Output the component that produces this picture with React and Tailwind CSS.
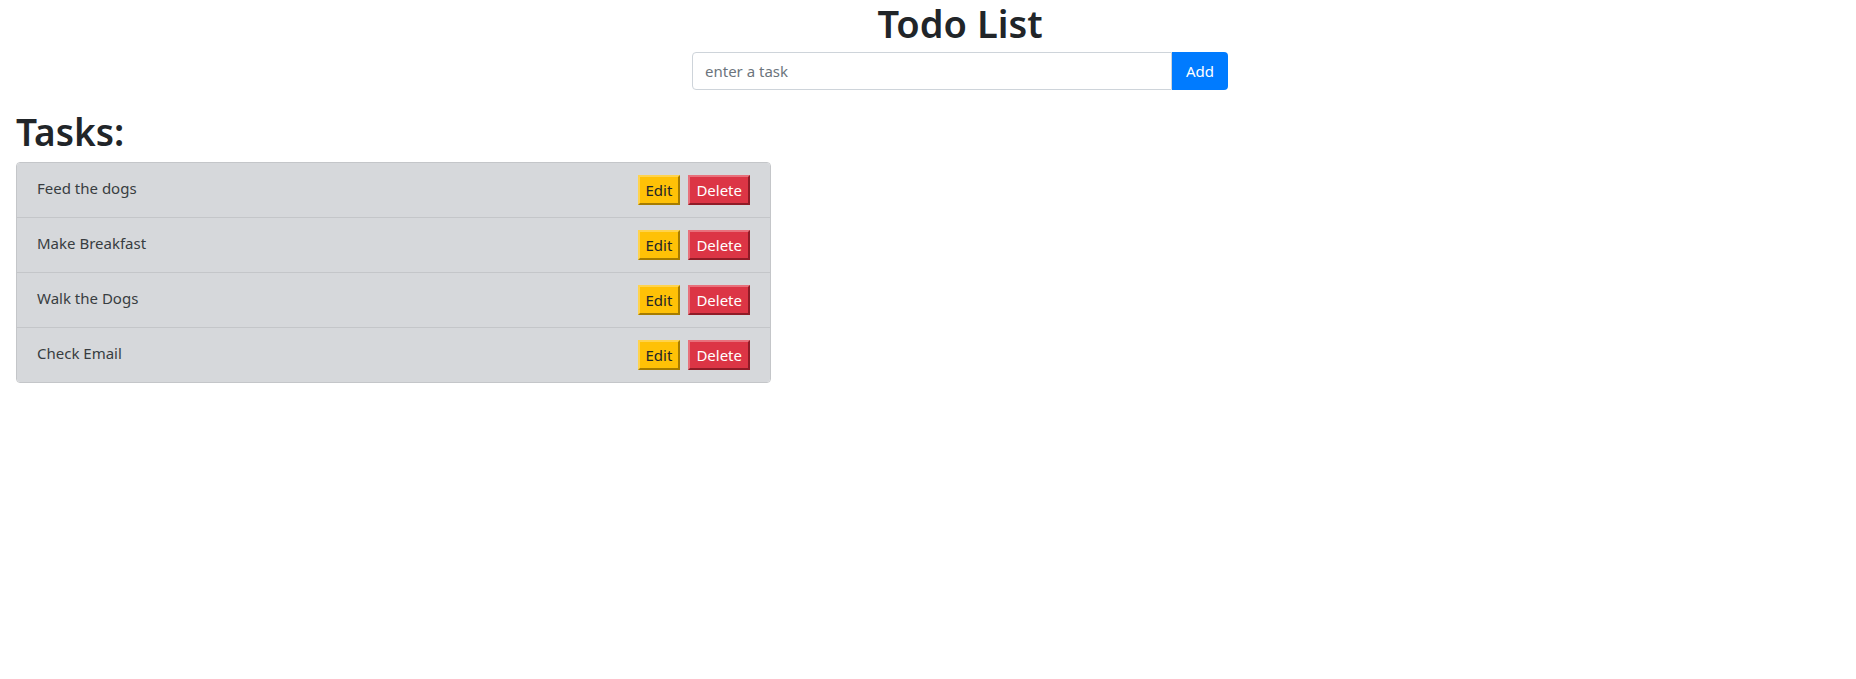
const tasks = ['Feed the dogs', 'Make Breakfast', 'Walk the Dogs', 'Check Email'];

const App = () => {
    return (
        <div className="min-h-screen bg-white text-[#212529] font-['Noto_Sans',sans-serif]">
            <div className="flex flex-col items-center pl-[64px]">
                <h1 className="text-[38px] font-semibold leading-[46px] mb-[6px]">Todo List</h1>
                <div className="flex">
                    <input
                        type="text"
                        placeholder="enter a task"
                        className="w-[480px] h-[38px] px-3 text-[15px] border border-[#ced4da] rounded-l bg-white placeholder:text-[#6c757d] outline-none"
                    />
                    <button className="w-[56px] h-[38px] bg-[#007bff] text-white text-[15px] rounded-r">Add</button>
                </div>
            </div>

            <div className="px-4">
                <h1 className="text-[37px] font-semibold leading-[48px] mt-[18px] mb-[6px]">Tasks:</h1>
                <ul className="w-[755px] rounded border border-[#c4c6c9] overflow-hidden">
                    {tasks.map((task, index) => (
                        <li
                            key={task}
                            className={`flex items-center justify-between bg-[#d6d8db] text-[#383d41] text-[15px] pl-5 pr-5 py-3 ${index > 0 ? 'border-t border-[#c4c6c9]' : ''}`}
                        >
                            <span className="-mt-1">{task}</span>
                            <div className="flex gap-2">
                                <button className="h-[30px] px-[6px] bg-[#ffc107] text-[#212529] border-2 border-t-[#ffd34d] border-l-[#ffd34d] border-r-[#a67c00] border-b-[#a67c00] leading-none">
                                    Edit
                                </button>
                                <button className="h-[30px] px-[6px] bg-[#dc3545] text-white border-2 border-t-[#e8707b] border-l-[#e8707b] border-r-[#8f1c27] border-b-[#8f1c27] leading-none">
                                    Delete
                                </button>
                            </div>
                        </li>
                    ))}
                </ul>
            </div>
        </div>
    );
};

export default App;
